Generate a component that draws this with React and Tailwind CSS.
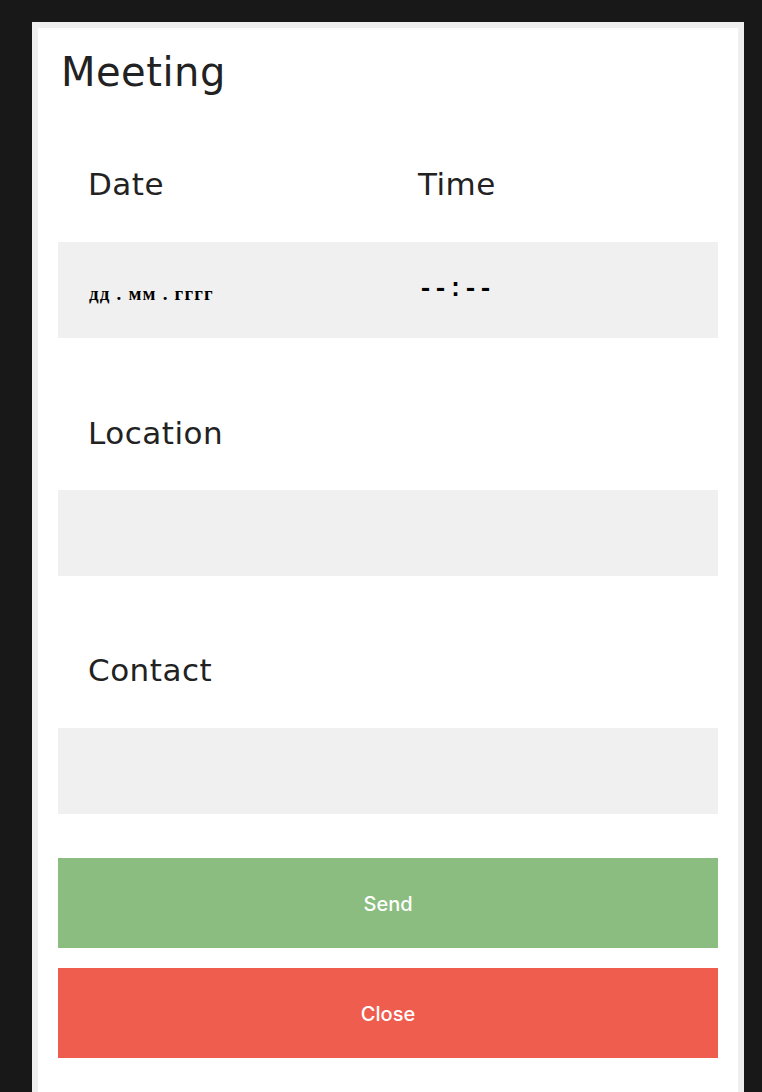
export default function App() {
  const label = "block h-[36px] leading-[36px] text-[31px] tracking-[0.5px] text-[#222] pl-[30px]";
  const sans = { fontFamily: '"DejaVu Sans", sans-serif' };
  return (
    <div className="h-[1092px] overflow-hidden bg-[#181818] pt-[22px] pl-[32px]">
      <div
        className="w-[712px] h-[1200px] border-[6px] border-b-0 border-[#efefef] bg-white px-[20px] pt-[20px]"
        style={sans}
      >
        <h1 className="h-[48px] leading-[48px] text-[40px] tracking-[0.5px] font-normal text-[#222] pl-[3px]">Meeting</h1>

        <div className="grid grid-cols-2 mt-[70px]">
          <span className={label}>Date</span>
          <span className={label}>Time</span>
        </div>
        <div className="grid grid-cols-2 mt-[40px] h-[96px] bg-[#f0f0f0]">
          <div className="flex items-center pl-[31px] pt-[8px]">
            <span
              className="text-[19px] font-bold text-black tracking-[1.2px]"
              style={{ fontFamily: '"Liberation Serif", serif' }}
            >
              дд . мм . гггг
            </span>
          </div>
          <div className="flex items-center pl-[30px]">
            <span
              className="text-[25px] font-bold text-black"
              style={{ fontFamily: '"Liberation Mono", monospace' }}
            >
              --:--
            </span>
          </div>
        </div>

        <span className={label + " mt-[77px]"}>Location</span>
        <div className="mt-[39px] h-[86px] bg-[#f0f0f0]" />

        <span className={label + " mt-[76px]"}>Contact</span>
        <div className="mt-[40px] h-[86px] bg-[#f0f0f0]" />

        <div className="mt-[44px] flex flex-col gap-[20px]" style={{ fontFamily: 'Inter, sans-serif' }}>
          <button className="h-[90px] w-full bg-[#8abd7f] text-white text-[20px] font-medium pt-[2px]">Send</button>
          <button className="h-[90px] w-full bg-[#ef5d4f] text-white text-[20px] font-medium pt-[2px]">Close</button>
        </div>
      </div>
    </div>
  );
}
